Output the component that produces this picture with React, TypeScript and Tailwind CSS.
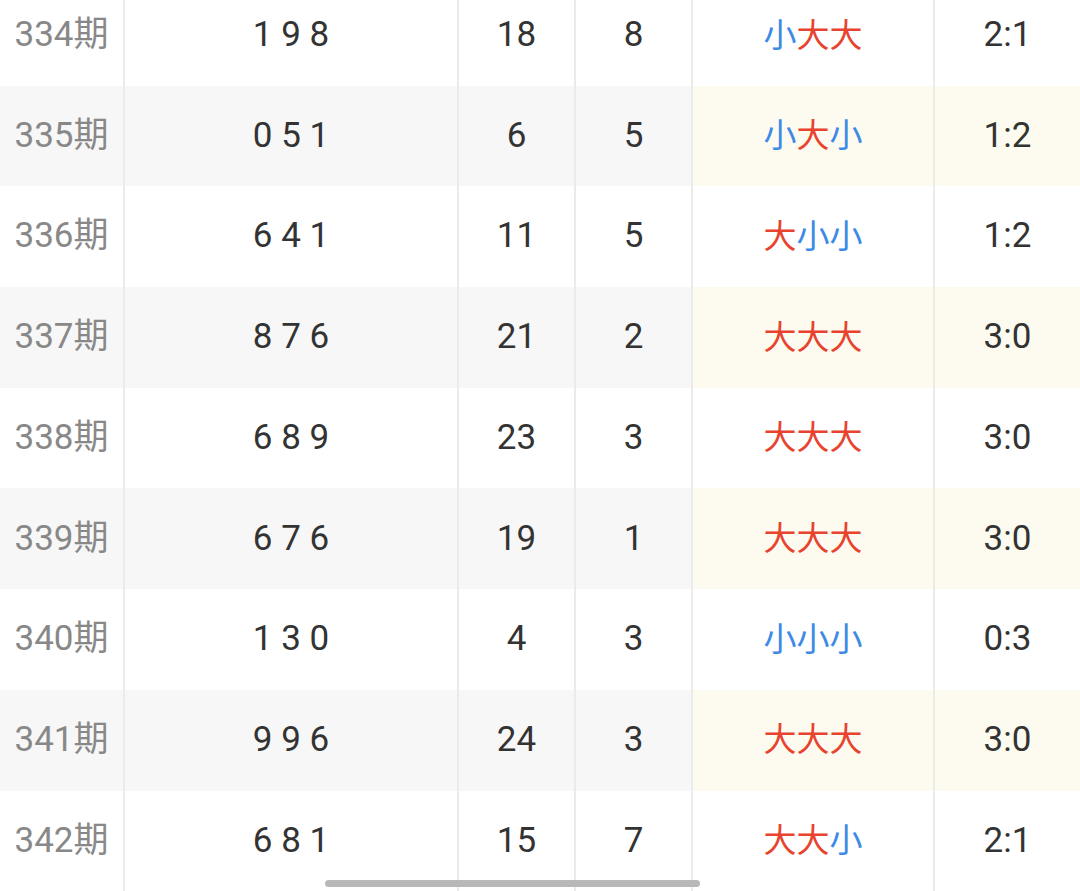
const rows = [
  { no: '334', nums: '1 9 8', sum: '18', span: '8', sizes: '小大大', ratio: '2:1' },
  { no: '335', nums: '0 5 1', sum: '6', span: '5', sizes: '小大小', ratio: '1:2' },
  { no: '336', nums: '6 4 1', sum: '11', span: '5', sizes: '大小小', ratio: '1:2' },
  { no: '337', nums: '8 7 6', sum: '21', span: '2', sizes: '大大大', ratio: '3:0' },
  { no: '338', nums: '6 8 9', sum: '23', span: '3', sizes: '大大大', ratio: '3:0' },
  { no: '339', nums: '6 7 6', sum: '19', span: '1', sizes: '大大大', ratio: '3:0' },
  { no: '340', nums: '1 3 0', sum: '4', span: '3', sizes: '小小小', ratio: '0:3' },
  { no: '341', nums: '9 9 6', sum: '24', span: '3', sizes: '大大大', ratio: '3:0' },
  { no: '342', nums: '6 8 1', sum: '15', span: '7', sizes: '大大小', ratio: '2:1' },
];

const cell = 'flex items-center justify-center border-r-2 border-[#ebebeb]';

export default function App() {
  return (
    <div
      className="relative h-[891px] w-[1080px] overflow-hidden bg-white text-[35px] text-[#333]"
      style={{ fontFamily: 'Roboto, "Noto Sans CJK SC", sans-serif' }}
    >
      <div className="-mt-[15px] flex flex-col">
        {rows.map((r, i) => {
          const alt = i % 2 === 1;
          return (
            <div key={r.no} className="grid h-[100.7px] grid-cols-[125px_334px_117px_117px_242px_1fr]">
              <div className={`${cell} text-[#888] ${alt ? 'bg-[#f7f7f7]' : ''}`}>{r.no}期</div>
              <div className={`${cell} whitespace-pre ${alt ? 'bg-[#f7f7f7]' : ''}`}>{r.nums}</div>
              <div className={`${cell} ${alt ? 'bg-[#f7f7f7]' : ''}`}>{r.sum}</div>
              <div className={`${cell} ${alt ? 'bg-[#f7f7f7]' : ''}`}>{r.span}</div>
              <div className={`${cell} text-[33px] ${alt ? 'bg-[#fdfbf0]' : ''}`}>
                {r.sizes.split('').map((c, j) => (
                  <span key={j} className={c === '大' ? 'text-[#e8432e]' : 'text-[#3d8ae6]'}>{c}</span>
                ))}
              </div>
              <div className={`flex items-center justify-center ${alt ? 'bg-[#fdfbf0]' : ''}`}>{r.ratio}</div>
            </div>
          );
        })}
      </div>
      {/* scroll indicator */}
      <div className="absolute left-[325px] top-[880px] h-[7px] w-[375px] rounded-full bg-[#b8b8b8]" />
    </div>
  );
}
